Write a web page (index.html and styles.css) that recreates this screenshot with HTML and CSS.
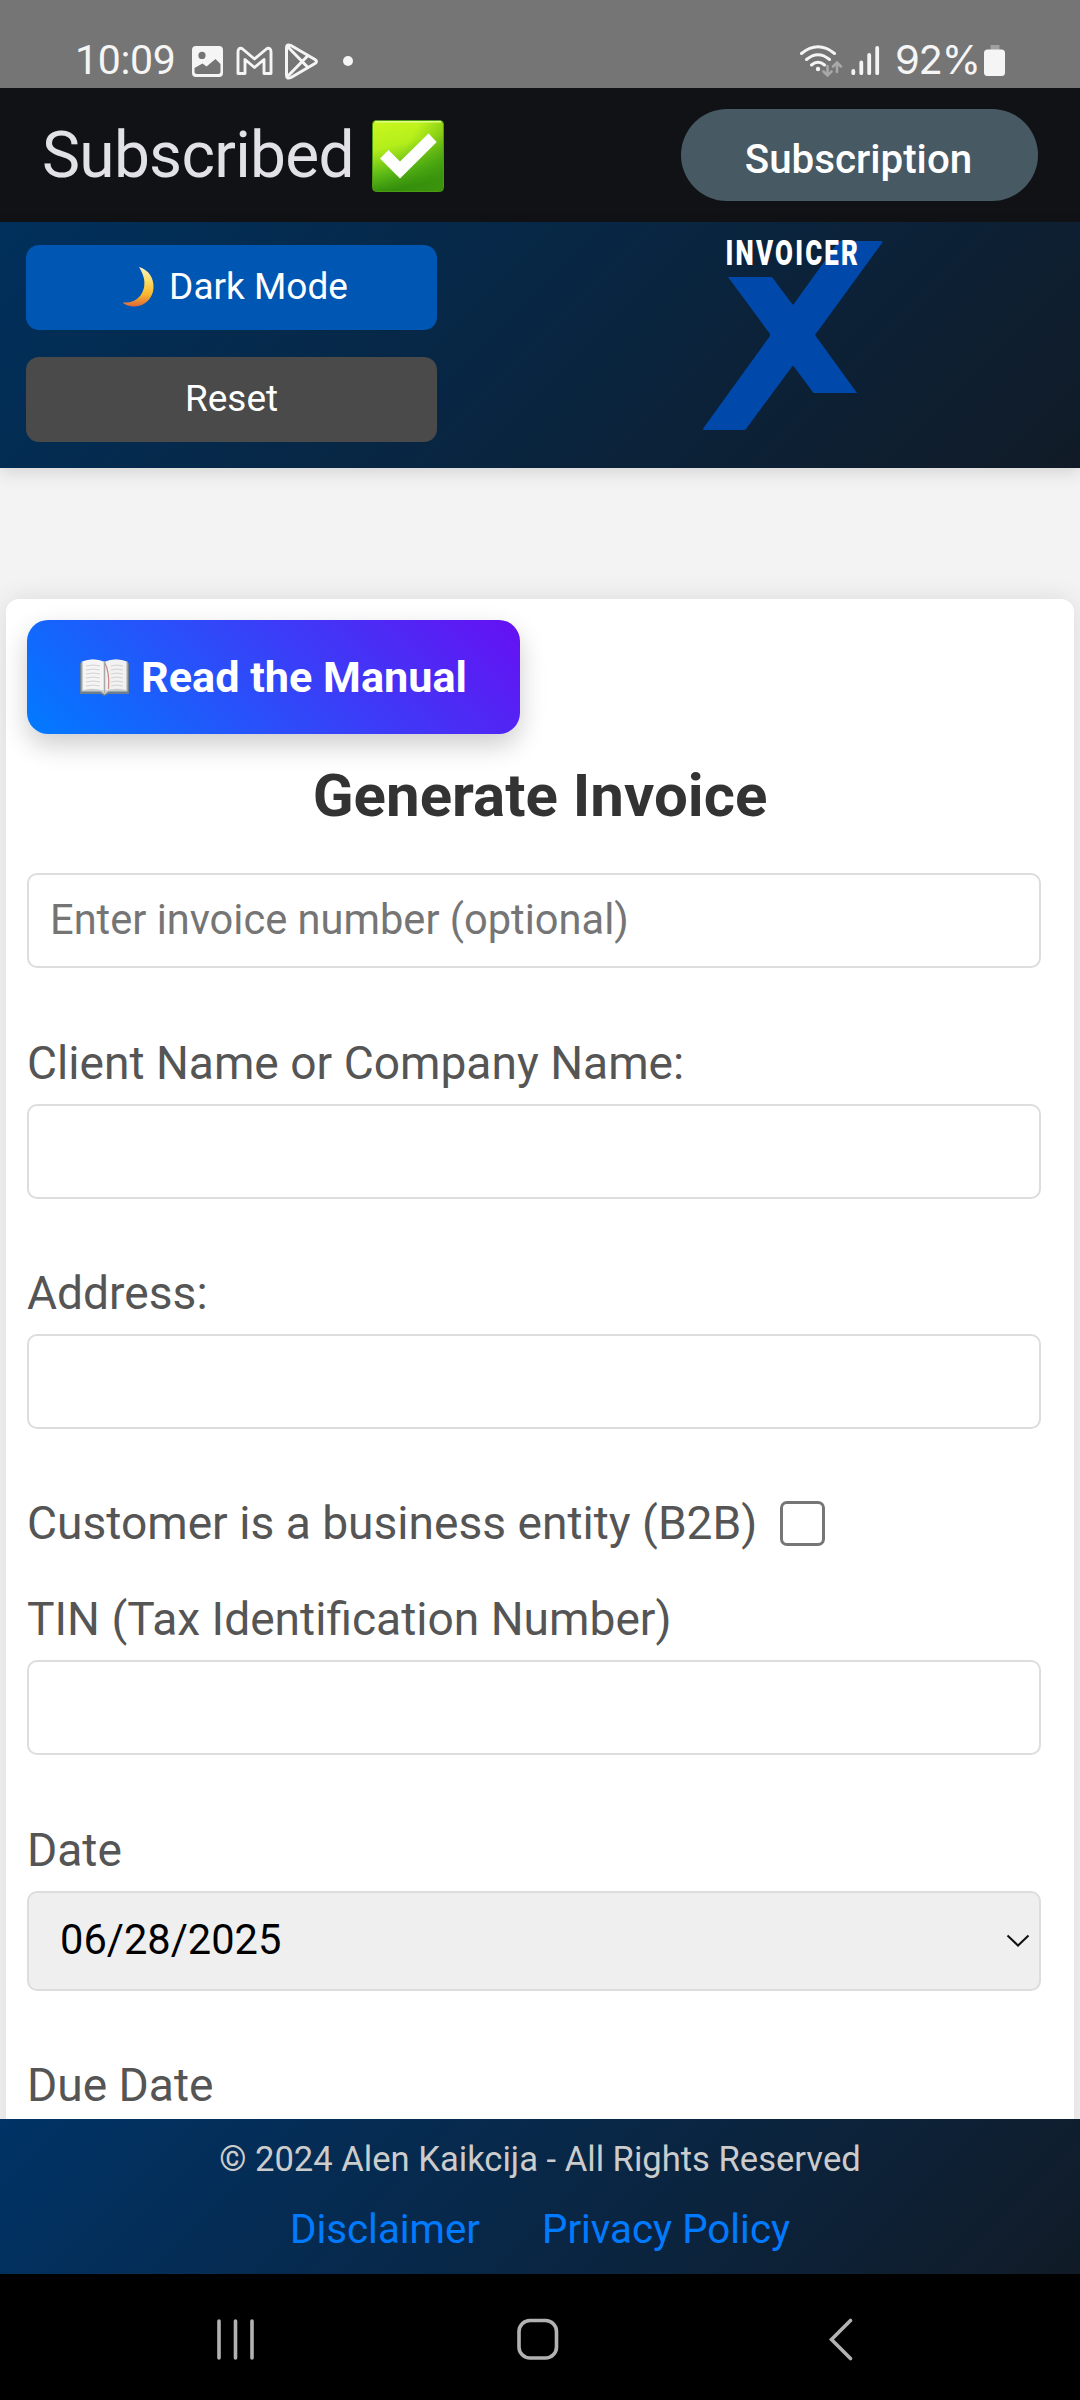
FILE: index.html
```html
<!DOCTYPE html>
<html lang="en">
<head>
<meta charset="utf-8">
<title>Invoicer X</title>
<link rel="stylesheet" href="styles.css">
</head>
<body>
<div class="screen">
  <div class="status">
    <span class="clock">10:09</span>
    <svg class="status-left" width="180" height="40" viewBox="190 42 180 40" fill="none">
      <path fill="#f5f5f5" fill-rule="evenodd" d="M196 46h23q4 0 4 4v23q0 4-4 4h-23q-4 0-4-4V50q0-4 4-4zM202 51.800a3.600 3.600 0 1 0 0 7.200a3.600 3.600 0 1 0 0-7.200zM194.500 68v3.500q0 2.500 2.500 2.500h21q2.500 0 2.500-2.500V64l-5-5-9 7.500-4-3z"/>
      <path stroke="#f5f5f5" stroke-width="2.900" stroke-linejoin="round" d="M238 73.500V52q0-4.500 4-3.500l12.500 10.500 12.500-10.500q4-1 4 3.500v21.500h-7V59.500l-9.500 8-9.500-8v14z"/>
      <path stroke="#f5f5f5" stroke-width="3" stroke-linejoin="round" d="M286.500 48q0-4.500 4.500-2.500l24 14q3 2 0 4l-24 14q-4.500 2-4.500-2.500zM287.500 46.500l20.500 21M287.500 76.500l20.500-21"/>
      <circle cx="348" cy="61" r="5" fill="#f5f5f5"/>
    </svg>
    <svg class="status-right" width="90" height="40" viewBox="798 42 90 40" fill="none" stroke="#f5f5f5" stroke-linecap="round">
      <path stroke-width="3" d="M802.500 53.500q16.500-13.500 33 0M807.500 59.500q11.500-9.500 23 0M812.500 65q6.500-5.500 13 0"/>
      <circle cx="819" cy="69" r="2.200" fill="#f5f5f5" stroke="none"/>
      <path stroke="#a8a8a8" stroke-width="2.600" d="M828.500 66v9M824.500 71.500l4 4 4-4M838 72v-9M834 66.500l4-4 4 4"/>
      <path stroke-width="3.800" d="M854.300 71v2.200M862.300 62.500v10.700M870.200 55v18.200M878.200 48v25.200"/>
    </svg>
    <span class="percent">92%</span>
    <svg class="battery" width="22" height="32" viewBox="0 0 22 32"><path d="M6.500 0h9v5h-9z" fill="#a0a0a0"/><rect y="4.500" width="21" height="26.500" rx="3.500" fill="#f5f5f5"/></svg>
  </div>

  <div class="appbar">
    <span class="appbar-title">Subscribed</span>
    <svg class="check" width="72" height="72" viewBox="0 0 72 72">
      <defs>
        <linearGradient id="lime" x1="0" y1="0" x2=".25" y2="1"><stop offset="0" stop-color="#cbf81e"/><stop offset=".4" stop-color="#b4ee1b"/><stop offset=".75" stop-color="#5bb916"/><stop offset="1" stop-color="#2f8a0c"/></linearGradient>
        <linearGradient id="shade" x1=".5" y1=".3" x2="1.100" y2=".65"><stop offset="0" stop-color="#3f9c0c" stop-opacity="0"/><stop offset="1" stop-color="#3f960c" stop-opacity=".75"/></linearGradient>
      </defs>
      <rect x=".5" y=".5" width="71" height="71" rx="4" fill="url(#lime)" stroke="#4d9b10"/>
      <rect x="1" y="1" width="70" height="70" rx="4" fill="url(#shade)"/>
      <path d="M3 1.800h66" stroke="#e0fb8c" stroke-width="1.500"/>
      <path d="M8 38.500l8.500-8.500L28 41.500 56.500 13.500l8.200 8.500L28 58.500z" fill="#fff"/>
    </svg>
    <button class="pill">Subscription</button>
  </div>

  <header class="header">
    <div class="actions">
      <button class="btn btn-blue">
        <svg width="33" height="40" viewBox="0 0 33 40"><defs><linearGradient id="moon" x1="0" y1="0" x2="0" y2="1"><stop offset="0" stop-color="#fff0c0"/><stop offset=".4" stop-color="#fcd95c"/><stop offset=".7" stop-color="#f9b52e"/><stop offset="1" stop-color="#dd6738"/></linearGradient></defs><path d="M17 0C27 3 32 11 31.500 21C31 31 23 39.500 12.500 39.500Q5 39.500 .5 35.500Q12 36.500 18.500 28.500Q27 16 17 0z" fill="url(#moon)"/></svg>
        <span>Dark Mode</span>
      </button>
      <button class="btn btn-gray">Reset</button>
    </div>
    <svg class="logo" width="184" height="206" viewBox="701 225 184 206">
      <path fill="#0049ab" d="M839 241H881q2.500 0 1 2L815 335 857 393H813.500L793.500 366H792.500L746 429Q745.500 430 744 430H705Q702 430 703.500 428L770 336V334L728 277H772L792.500 304.500H793.500z"/>
      <text class="logo-word" transform="translate(725.500 265) scale(.72 1)" textLength="184" lengthAdjust="spacing">INVOICER</text>
    </svg>
  </header>

  <main class="page">
    <section class="card">
      <button class="manual">
        <svg width="49" height="37" viewBox="0 0 49 37"><path d="M0 4h49v31H28l-3.500 2-3.500-2H0z" fill="#6c7f8e"/><path d="M1.500 2.500Q13-1.500 24.500 2.500Q36-1.500 47.500 2.500V32.500H28.500L24.500 35.500 20.500 32.500H1.500z" fill="#c9cccd"/><path d="M3 2.500Q14-1.500 23.500 3V31.500Q14 28.500 3 31z" fill="#f5f5f5"/><path d="M46 2.500Q35-1.500 25.500 3V31.500Q35 28.500 46 31z" fill="#f2f2f2"/><path d="M6 7q7-2 14 0M6 11q7-2 14 0M6 15q7-2 14 0M6 19q7-2 14 0M6 23q7-2 14 0M6 27q7-2 14 0M31 7q6-2 12 0M31 11q6-2 12 0M31 15q6-2 12 0M31 19q6-2 12 0M31 23q6-2 12 0M31 27q6-2 12 0" fill="none" stroke="#d2d2d2" stroke-width="1"/><path d="M24.500 3Q30 14 28.500 30" fill="none" stroke="#c98a8a" stroke-width="1.300"/><path d="M24.500 3v31" stroke="#aaa"/></svg>
        <span>Read the Manual</span>
      </button>
      <h2 class="title">Generate Invoice</h2>
      <form class="form">
        <input class="input first" type="text" placeholder="Enter invoice number (optional)">
        <label class="label">Client Name or Company Name:</label>
        <input class="input" type="text">
        <label class="label">Address:</label>
        <input class="input" type="text">
        <div class="check-row"><span>Customer is a business entity (B2B)</span><i class="box"></i></div>
        <label class="label">TIN (Tax Identification Number)</label>
        <input class="input first" type="text">
        <label class="label">Date</label>
        <div class="select"><span>06/28/2025</span><svg width="24" height="14" viewBox="0 0 24 14"><path d="M1.500 1.500L12 11.500 22.500 1.500" fill="none" stroke="#111" stroke-width="2"/></svg></div>
        <label class="label">Due Date</label>
      </form>
    </section>
  </main>

  <footer class="footer">
    <p class="copy">© 2024 Alen Kaikcija - All Rights Reserved</p>
    <div class="links"><a>Disclaimer</a><a>Privacy Policy</a></div>
  </footer>

  <nav class="nav">
    <svg width="640" height="44" viewBox="215 2317 640 44" fill="none" stroke="#b2b2b2" stroke-width="3.600" stroke-linecap="round">
      <path d="M219 2321v37M235.500 2321v37M252 2321v37"/>
      <rect x="519" y="2320.500" width="37.500" height="37.500" rx="11"/>
      <path d="M850.500 2320.500L831.500 2339.500 850.500 2358.500"/>
    </svg>
  </nav>
</div>
</body>
</html>
```
FILE: styles.css
```css
* { box-sizing: border-box; }
body { margin: 0; font-family: Roboto, sans-serif; }
button { border: 0; margin: 0; padding: 0; font-family: inherit; color: #fff; }
.screen { width: 1080px; height: 2400px; display: flex; flex-direction: column; overflow: hidden; }

.status { flex: none; height: 88px; background: #757575; color: #f5f5f5; display: flex; align-items: flex-start; padding: 42px 74px 0 75px; }
.clock, .percent { font-size: 41px; line-height: 36px; white-space: nowrap; }
.clock { width: 115px; letter-spacing: -0.3px; }
.status-right { margin-left: auto; }
.percent { width: 97px; padding-left: 8px; font-family: Inter, sans-serif; font-size: 40px; letter-spacing: -1.2px; }
.battery { margin-top: 3px; }

.appbar { flex: none; height: 134px; background: #111216; display: flex; align-items: center; padding: 0 42px 0 42px; }
.appbar-title { font-size: 64px; line-height: 76px; padding-top: 1px; letter-spacing: -0.7px; color: #e3e1e8; }
.check { margin: 2px 0 0 18px; }
.pill { margin-left: auto; width: 357px; height: 92px; border-radius: 46px; background: #475963; font-size: 40.300px; font-weight: 500; line-height: 48px; padding: 9px 2px 0 0; }

.header { flex: none; height: 246px; position: relative; z-index: 2; background: linear-gradient(135deg, #00305c, #111b27); box-shadow: 0 5px 16px rgba(0, 0, 0, .12); display: flex; align-items: flex-start; padding: 3px 0 0 26px; }
.actions { width: 411px; display: flex; flex-direction: column; padding-top: 20px; gap: 27px; }
.btn { height: 85px; border-radius: 13px; font-size: 37px; line-height: 44px; display: flex; align-items: center; justify-content: center; padding-bottom: 2px; }
.btn-blue { background: #0056b3; gap: 14px; padding-left: 7px; }
.btn-gray { background: #4a4a4a; }
.logo { margin-left: 264px; overflow: visible; }
.logo-word { font: 900 36px Roboto, sans-serif; fill: #fff; }

.page { flex: 1; min-height: 0; overflow: hidden; background: #f3f3f3; padding: 131px 6px 0; }
.card { height: 1900px; border-radius: 13px; background: #fff; box-shadow: 0 0 27px rgba(0, 0, 0, .1); padding: 21px 33px 0 21px; }
.manual { display: flex; align-items: center; justify-content: center; gap: 12px; width: 493px; height: 114px; border-radius: 21px; background: linear-gradient(45deg, #007bff, #6610f2); box-shadow: 0 11px 27px rgba(0, 0, 0, .2); font-size: 43.200px; line-height: 50px; font-weight: 700; }
.manual span { padding-top: 1px; }
.title { margin: 27px -12px 42px 0; font-size: 60px; line-height: 70px; font-weight: 700; color: #333; text-align: center; }
.form { display: flex; flex-direction: column; }
.input { height: 95px; width: 100%; margin: 0 0 68px; padding: 0 21px 2px; border: 2px solid #ddd; border-radius: 10px; background: #fff; font: 41.600px Roboto, sans-serif; color: #000; }
.input::placeholder { color: #757575; opacity: 1; }
.input.first { margin-bottom: 69px; }
.label { font-size: 46.130px; line-height: 52px; height: 54px; margin-bottom: 13px; color: #555; }
.check-row { display: flex; align-items: flex-start; gap: 23px; height: 54px; margin-bottom: 42px; font-size: 46.130px; line-height: 52px; color: #555; }
.box { width: 45px; height: 45px; margin-top: 4px; border: 3px solid #767676; border-radius: 7px; }
.select { height: 100px; margin-bottom: 68px; border: 2px solid #ddd; border-radius: 10px; background: #efefef; font-size: 41.600px; line-height: 50px; color: #000; display: flex; align-items: center; justify-content: space-between; padding: 0 9px 3px 31px; }
.select svg { margin-top: 2px; }

.footer { flex: none; position: relative; z-index: 2; height: 155px; background: linear-gradient(135deg, #003366, #111b27); text-align: center; padding-top: 19px; }
.copy { margin: 0; font-size: 34.600px; line-height: 42px; color: #ccc; }
.links { display: flex; justify-content: center; gap: 62px; margin-top: 26px; font-size: 40.300px; line-height: 48px; color: #007bff; }
.nav { flex: none; height: 126px; background: #000; padding: 43px 0 0 215px; }
```
